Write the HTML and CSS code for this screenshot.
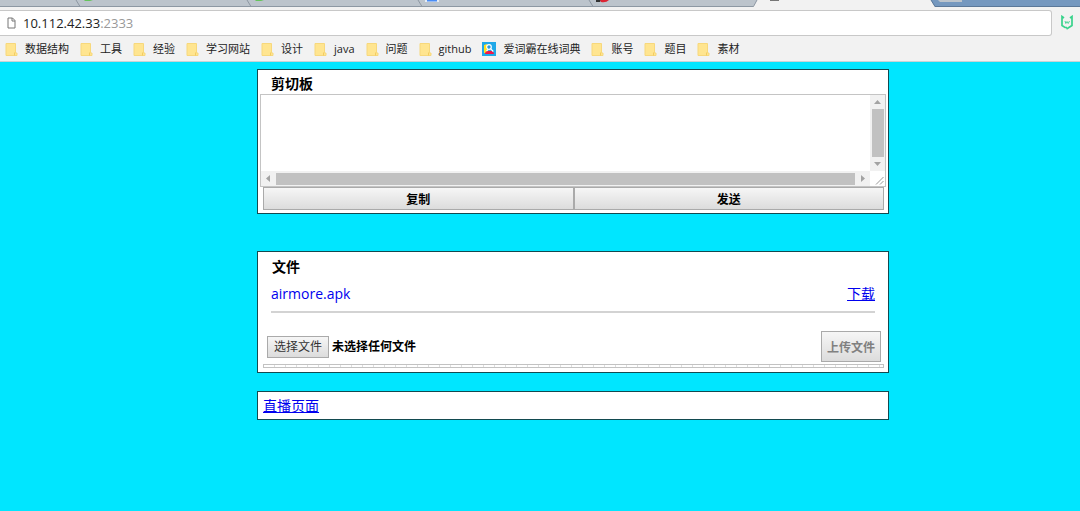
FILE: index.html
```html
<!DOCTYPE html>
<html lang="zh-CN">
<head>
<meta charset="utf-8">
<title>剪切板</title>
<link rel="stylesheet" href="styles.css">
</head>
<body>
<svg width="0" height="0" class="defs" aria-hidden="true">
  <symbol id="folder" viewBox="0 0 13 15">
    <path d="M1 1.500h9.500v9.500h1.500v2.500h-11z" fill="#ffe590" stroke="#f7d87c"/>
    <path d="M9.500 10.500v3" stroke="#f3cd61"/>
  </symbol>
</svg>
<header class="browser">
  <div class="tabs">
    <svg class="tab-shapes" width="965" height="7" viewBox="0 0 965 7" aria-hidden="true">
      <path d="M0 0H757L754 6.500H0z" fill="#bcc4cc"/>
      <path d="M757 0H931L935 7H753z" fill="#f2f2f2"/>
      <path d="M0 6.500H753.500L757 0M76 0l4 6.500M247 0l4 6.500M418 0l4 6.500M589 0l4 6.500" fill="none" stroke="#8d98a3"/>
      <path d="M931 0l4 6.500h30" fill="none" stroke="#5b7899"/>
      <path d="M84 0h9l-3 1h-5zM255 0h9l-3 1h-5z" fill="#65c45b"/>
      <path d="M425 0h14v2h-14z" fill="#e4ecf6"/>
      <path d="M427 0h10v1.500h-10z" fill="#4a8df5"/>
      <path d="M596 0h5l-1 2h-4z" fill="#333"/>
      <path d="M600 0h9q-3 3-8 2z" fill="#dc2434"/>
      <path d="M770 0h9v1h-9z" fill="#777"/>
      <path d="M938 0h24v2h-22z" fill="#bcc4cc"/>
    </svg>
  </div>
  <div class="toolbar">
    <div class="address">
      <svg width="9" height="12" viewBox="0 0 9 12" aria-hidden="true"><path d="M1 1h4.500l2.500 2.500v7.500h-7zM5 1v3h3" fill="#fff" stroke="#777"/></svg>
      <a class="url" href="#">10.112.42.33<span class="port">:2333</span></a>
    </div>
    <button class="extension" type="button" aria-label="扩展程序">
      <svg width="14" height="16" viewBox="0 0 14 16"><path d="M4 3L2 1.500v9l3 2h2M10 3l2-1.500v9l-5.500 3.500" fill="none" stroke="#39d38c" stroke-width="1.700"/><path d="M5 6l.8 2.500 1.200-2 1.200 2L9.500 6" fill="none" stroke="#39d38c" stroke-width=".9"/></svg>
    </button>
  </div>
  <nav class="bookmarks">
    <a href="#"><svg><use href="#folder"/></svg>数据结构</a>
    <a href="#"><svg><use href="#folder"/></svg>工具</a>
    <a href="#"><svg><use href="#folder"/></svg>经验</a>
    <a href="#"><svg><use href="#folder"/></svg>学习网站</a>
    <a href="#"><svg><use href="#folder"/></svg>设计</a>
    <a href="#"><svg><use href="#folder"/></svg>java</a>
    <a href="#"><svg><use href="#folder"/></svg>问题</a>
    <a href="#"><svg><use href="#folder"/></svg>github</a>
    <a href="#"><svg class="dictionary" viewBox="0 0 14 14"><path d="M0 0h14v14H0z" fill="#20a8e8"/><path d="M2 3l3-1v9H2z" fill="#ffdf22"/><path d="M3 12q0-3 3-3l4 0q2 1 2 3z" fill="#f01848"/><circle cx="7" cy="5" r="2.300" fill="#2898dc" stroke="#fff" stroke-width="1.200"/><path d="M8.500 6.700l2.800 2.800M6 7.500L4.500 9" stroke="#fff" stroke-width="1.200"/></svg>爱词霸在线词典</a>
    <a href="#"><svg><use href="#folder"/></svg>账号</a>
    <a href="#"><svg><use href="#folder"/></svg>题目</a>
    <a href="#"><svg><use href="#folder"/></svg>素材</a>
  </nav>
</header>
<main class="page">
  <section class="panel clipboard">
    <h2><label for="clip">剪切板</label></h2>
    <div class="editor">
      <textarea id="clip" wrap="off"></textarea>
      <div class="bar vertical" aria-hidden="true">
        <svg width="7" height="4" viewBox="0 0 7 4"><path d="M0 4l3.500-4L7 4z"/></svg>
        <div class="thumb"></div>
        <svg width="7" height="4" viewBox="0 0 7 4"><path d="M0 0h7L3.500 4z"/></svg>
      </div>
      <div class="bar horizontal" aria-hidden="true">
        <svg width="4" height="7" viewBox="0 0 4 7"><path d="M4 0v7L0 3.500z"/></svg>
        <div class="thumb"></div>
        <svg width="4" height="7" viewBox="0 0 4 7"><path d="M0 0l4 3.500L0 7z"/></svg>
      </div>
      <svg class="grip" width="15" height="15" viewBox="0 0 15 15" aria-hidden="true"><path d="M6 13.500l7.500-7.500M10 13.500l3.500-3.500" stroke="#999"/></svg>
    </div>
    <div class="actions">
      <button type="button">复制</button>
      <button type="button">发送</button>
    </div>
  </section>
  <section class="panel files">
    <h2>文件</h2>
    <div class="file">
      <span class="name">airmore.apk</span>
      <a href="#">下载</a>
    </div>
    <form class="upload">
      <label class="picker">
        <input type="file">
        <span class="choose">选择文件</span>
        <span class="chosen">未选择任何文件</span>
      </label>
      <button type="button" disabled>上传文件</button>
    </form>
    <progress value="0" max="100" aria-label="上传进度"></progress>
  </section>
  <section class="panel live">
    <a href="#">直播页面</a>
  </section>
</main>
</body>
</html>
```
FILE: styles.css
```css
* { box-sizing: border-box; }

body {
  margin: 0;
  min-height: 100vh;
  background: #00e6ff;
  color: #000;
  font: 14px/20px "Open Sans", "Noto Sans CJK SC", sans-serif;
}

svg { display: block; flex: none; }
.defs { position: absolute; }
button { font-family: inherit; }

/* Browser chrome */
.browser {
  background: #f2f2f2;
  border-bottom: 1px solid #c9d3d5;
}
.tabs {
  height: 7px;
  background: #7598bf;
  box-shadow: inset 0 -1px #5b7899;
}
.toolbar {
  display: flex;
  align-items: center;
  gap: 8px;
  padding: 3px 6px 1px 0;
}
.address {
  flex: 1;
  display: flex;
  align-items: center;
  gap: 7px;
  height: 26px;
  padding-left: 7px;
  background: #fff;
  border: 1px solid #c8c8c8;
  border-left: 0;
  border-radius: 0 3px 3px 0;
}
.url {
  color: #222;
  font-size: 13px;
  text-decoration: none;
}
.port { color: #999; }
.extension {
  padding: 0;
  border: 0;
  background: none;
}
.bookmarks {
  display: flex;
  gap: 11px;
  height: 24px;
  padding-left: 5px;
  overflow: hidden;
}
.bookmarks a {
  display: flex;
  align-items: center;
  gap: 7px;
  color: #222;
  font-size: 11px;
  text-decoration: none;
  white-space: nowrap;
}
.bookmarks svg { width: 13px; height: 15px; }
.bookmarks .dictionary { width: 14px; height: 14px; }

/* Page */
.page {
  width: 632px;
  max-width: 100%;
  margin-left: 23.8%;
  padding-top: 7px;
}
.panel {
  background: #fff;
  border: 1px solid #124a50;
}
.panel a { color: #00e; }
h2 {
  margin: 0;
  padding: 0 13px;
  font-size: 14px;
  line-height: 20px;
}

.clipboard {
  margin-bottom: 37px;
  padding: 4px 2px 3px;
}
.clipboard h2 { padding: 0 11px; }
.editor {
  display: grid;
  grid-template-columns: 1fr 15px;
  grid-template-rows: 76px 15px;
  border: 1px solid #c4c4c4;
}
.editor textarea {
  min-width: 0;
  padding: 2px;
  border: 0;
  outline: 0;
  resize: none;
  overflow: hidden;
  font: inherit;
}
.bar {
  display: flex;
  align-items: center;
  background: #f1f1f1;
  fill: #a3a3a3;
}
.vertical {
  flex-direction: column;
  gap: 5px;
  padding: 5px 0;
}
.horizontal {
  gap: 6px;
  padding: 0 5px;
}
.thumb {
  flex: 1;
  background: #c1c1c1;
}
.vertical .thumb { width: 12px; }
.horizontal .thumb { height: 12px; }

.actions {
  display: flex;
  padding: 0 2px 0 3px;
}
.actions button,
.upload button,
.choose {
  border: 1px solid #aaa;
  background: linear-gradient(#f6f6f6, #dcdcdc);
}
.actions button {
  flex: 1;
  height: 23px;
  padding: 0;
  color: #000;
  font-size: 12px;
  font-weight: bold;
}

.files {
  margin-bottom: 18px;
  padding: 5px 4px 4px 5px;
}
.files h2 { padding: 0 9px; }
.file {
  display: flex;
  justify-content: space-between;
  margin: 0 9px 18px 8px;
  padding: 7px 0;
  border-bottom: 2px solid #d3d3d3;
}
.name { color: #00e; }
.upload {
  display: flex;
  align-items: center;
  justify-content: space-between;
  margin-bottom: 2px;
  padding: 0 3px 0 4px;
}
.picker {
  display: flex;
  align-items: center;
  gap: 3px;
  font-size: 12px;
}
.picker input {
  position: absolute;
  width: 1px;
  height: 1px;
  opacity: 0;
}
.choose {
  padding: 0 6px;
  color: #333;
}
.chosen { font-weight: bold; }
.upload button {
  height: 31px;
  padding: 0 5px;
  color: #808080;
  font-size: 12px;
  font-weight: bold;
}
progress {
  display: block;
  width: 100%;
  height: 4px;
  border: 1px solid #c2c2c2;
  appearance: none;
}
progress::-webkit-progress-bar {
  background: repeating-linear-gradient(90deg, #fff 0 10px, #ddd 10px 11px);
}

.live { padding: 4px 5px 3px; }
```
